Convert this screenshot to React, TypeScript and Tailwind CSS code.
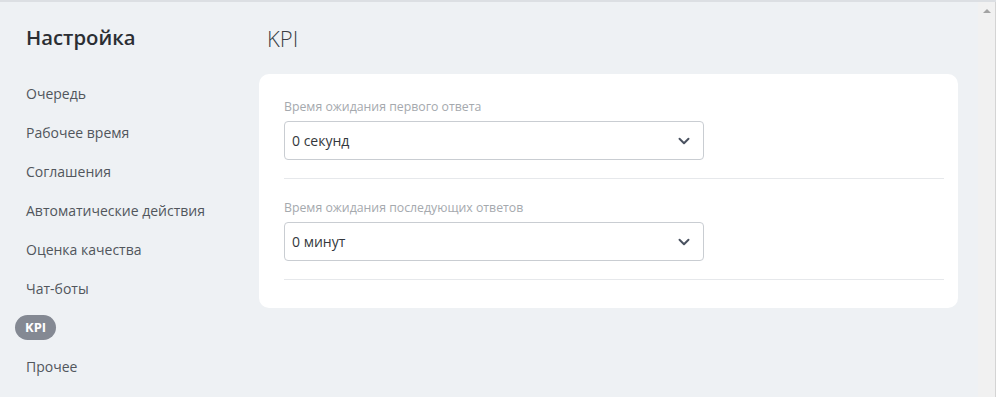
import { ChevronDown } from 'lucide-react';

const navItems = [
  'Очередь',
  'Рабочее время',
  'Соглашения',
  'Автоматические действия',
  'Оценка качества',
  'Чат-боты',
  'KPI',
  'Прочее',
];

function SelectField({ label, value }: { label: string; value: string }) {
  return (
    <div className="border-b border-[#e6e8eb] pb-[18px] pt-[20px]">
      <div className="text-[12.3px] leading-[18px] text-[#a5a9ae]">{label}</div>
      <div className="mt-[5px] flex h-[39px] w-[420px] items-center justify-between rounded-[4px] border border-[#c9cdd2] bg-white pl-[7px] pr-[10px]">
        <span className="text-[14px] text-[#33373c]">{value}</span>
        <ChevronDown className="h-[18px] w-[18px] text-[#4a5260]" strokeWidth={2.6} />
      </div>
    </div>
  );
}

export default function App() {
  return (
    <div
      className="flex h-[397px] w-[996px] overflow-hidden border-t-2 border-[#dcdfe3] bg-[#eef1f4]"
      style={{ fontFamily: '"Open Sans", "Noto Sans", sans-serif' }}
    >
      {/* Sidebar */}
      <div className="w-[259px] shrink-0 pl-[15px]">
        <h1 className="mt-[21px] pl-[11px] text-[20.3px] font-semibold leading-[28px] text-[#2b2e33]">Настройка</h1>
        <nav className="mt-[30px] flex flex-col items-start gap-[14px]">
          {navItems.map((item) =>
            item === 'KPI' ? (
              <span
                key={item}
                className="flex h-[25px] items-center rounded-full bg-[#848993] px-[10px] text-[13px] font-bold text-white"
              >
                {item}
              </span>
            ) : (
              <span key={item} className="flex h-[25px] items-center px-[11px] text-[14px] text-[#51565c]">
                {item}
              </span>
            )
          )}
        </nav>
      </div>

      {/* Content */}
      <div className="flex-1">
        <h2 className="mt-[22px] pl-[8px] text-[22px] font-light leading-[28px] text-[#3a3e44]">KPI</h2>
        <div className="mt-[22px] w-[699px] rounded-[10px] bg-white pb-[28px] pl-[25px] pr-[14px] pt-[4px]">
          <SelectField label="Время ожидания первого ответа" value="0 секунд" />
          <SelectField label="Время ожидания последующих ответов" value="0 минут" />
        </div>
      </div>

      {/* Scrollbar */}
      <div className="flex w-[18px] shrink-0 justify-center border-r border-[#d4d4d4] bg-[#f1f1f1] pt-[7px]">
        <div className="h-0 w-0 border-x-[4px] border-b-[4px] border-x-transparent border-b-[#a3a3a3]" />
      </div>
    </div>
  );
}
